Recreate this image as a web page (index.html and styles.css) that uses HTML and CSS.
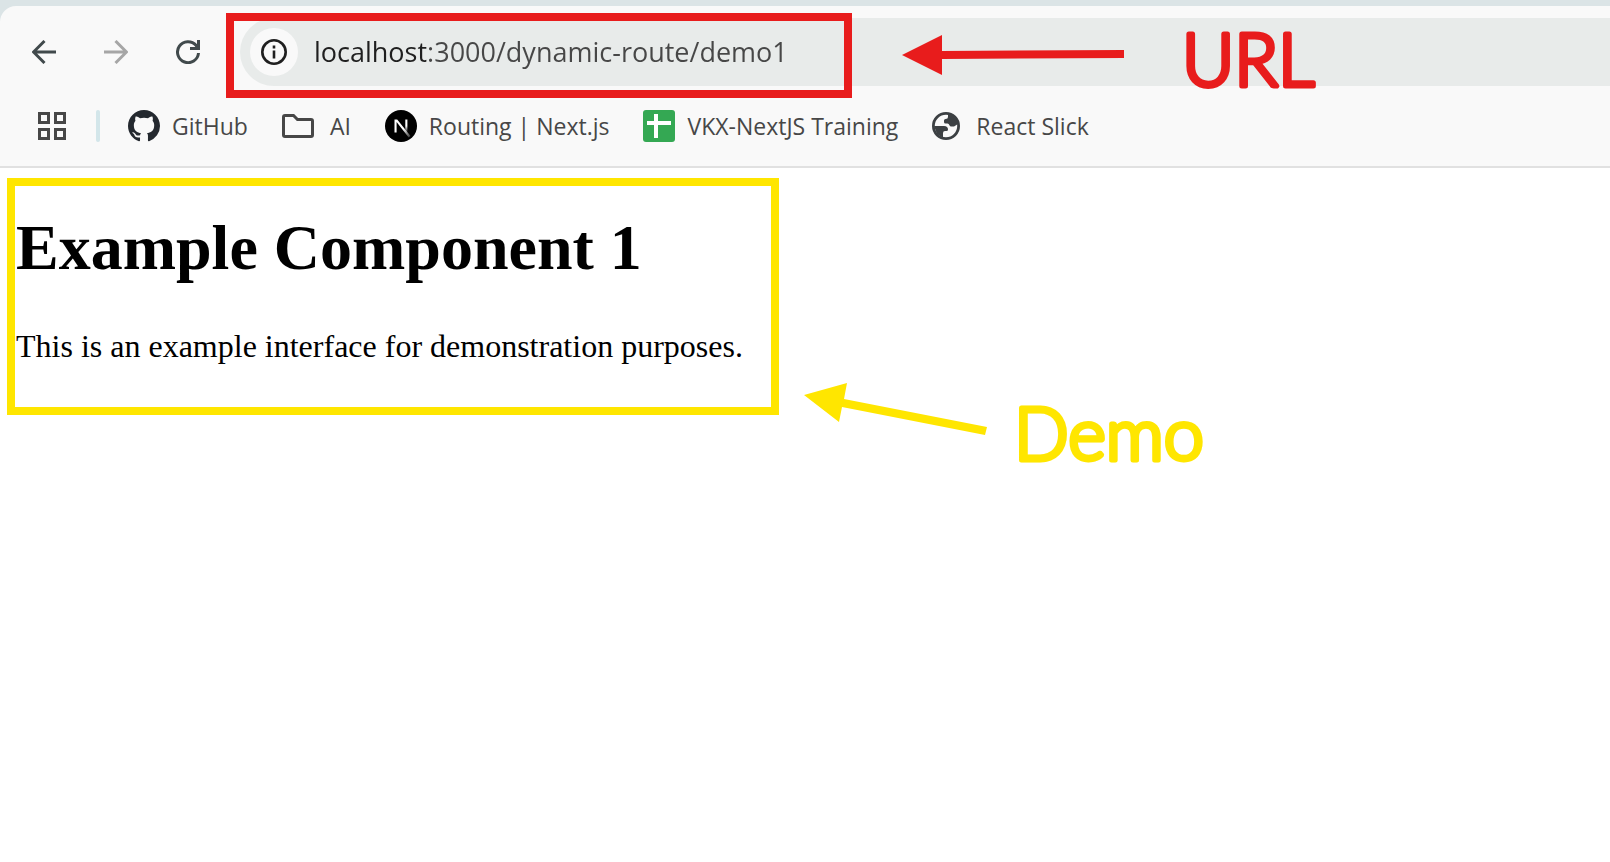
FILE: index.html
```html
<!DOCTYPE html>
<html lang="en">
<head>
<meta charset="utf-8">
<title>Example Component 1</title>
<link rel="stylesheet" href="styles.css">
</head>
<body>
<header class="browser">
  <div class="chrome">
    <nav class="toolbar" aria-label="Browser">
      <button class="nav-button" aria-label="Back">
        <svg width="24" height="24" viewBox="0 0 24 24" fill="none" stroke="currentColor" stroke-width="3"><path d="M24 12H2M12.500 1 1.500 12l11 11"/></svg>
      </button>
      <button class="nav-button" aria-label="Forward" disabled>
        <svg width="24" height="24" viewBox="0 0 24 24" fill="none" stroke="currentColor" stroke-width="3"><path d="M0 12h22M11.500 1l11 11-11 11"/></svg>
      </button>
      <button class="nav-button" aria-label="Reload">
        <svg width="24" height="24" viewBox="0 0 24 24" fill="none" stroke="currentColor" stroke-width="3"><path d="M22.500 13A10.500 10.500 0 1 1 20 5.300L22 8"/><path d="M22.500 0v8.500H14"/></svg>
      </button>
      <form class="address">
        <button class="site-info" type="button" aria-label="Site information">
          <svg width="26" height="26" viewBox="0 0 26 26" fill="none" stroke="currentColor"><circle cx="13" cy="13" r="11.700" stroke-width="2.600"/><path d="M13 11.500v8M13 6.500v3" stroke-width="2.600"/></svg>
        </button>
        <input class="url" type="text" aria-label="Address" value="localhost:3000/dynamic-route/demo1">
      </form>
    </nav>
    <nav class="bookmarks" aria-label="Bookmarks">
      <button class="apps" aria-label="Apps">
        <svg width="28" height="28" viewBox="0 0 28 28" fill="none" stroke="currentColor" stroke-width="3"><path d="M1.500 1.500h9v9h-9zM17.500 1.500h9v9h-9zM1.500 17.500h9v9h-9zM17.500 17.500h9v9h-9z"/></svg>
      </button>
      <span class="divider"></span>
      <a class="bookmark" href="#">
        <svg width="32" height="32" viewBox="0 0 16 16" fill="#24292f"><path d="M8 0C3.580 0 0 3.580 0 8c0 3.540 2.290 6.530 5.470 7.590.4.070.55-.17.55-.38 0-.19-.01-.82-.01-1.490-2.010.37-2.530-.49-2.690-.94-.09-.23-.48-.94-.82-1.130-.28-.15-.68-.52-.01-.53.63-.01 1.080.58 1.230.82.72 1.210 1.870.87 2.330.66.07-.52.28-.87.51-1.070-1.780-.2-3.640-.89-3.640-3.950 0-.87.31-1.590.82-2.150-.08-.2-.36-1.020.08-2.120 0 0 .67-.21 2.200.82A7.600 7.600 0 0 1 8 3.860c.68 0 1.360.09 2 .27 1.530-1.040 2.200-.82 2.200-.82.44 1.100.16 1.920.08 2.120.51.56.82 1.270.82 2.150 0 3.070-1.870 3.750-3.650 3.950.29.25.54.73.54 1.480 0 1.070-.01 1.930-.01 2.200 0 .21.15.46.55.38A8.010 8.010 0 0 0 16 8c0-4.420-3.580-8-8-8z"/></svg>
        <span>GitHub</span>
      </a>
      <a class="bookmark folder" href="#">
        <svg width="32" height="24" viewBox="0 0 32 24" fill="none" stroke="currentColor" stroke-width="3"><path d="M3 1.500h8.500l4 4H29q1.500 0 1.500 1.500v14q0 1.500-1.500 1.500H3q-1.500 0-1.500-1.500V3q0-1.500 1.500-1.500z"/></svg>
        <span>AI</span>
      </a>
      <a class="bookmark" href="#">
        <svg width="32" height="32" viewBox="0 0 32 32"><defs><linearGradient id="fade" x1="0" y1="0" x2="0" y2="1"><stop offset=".5" stop-color="#fff"/><stop offset="1" stop-color="#fff" stop-opacity="0"/></linearGradient><linearGradient id="tail" gradientUnits="userSpaceOnUse" x1="18" y1="19" x2="25" y2="27"><stop stop-color="#fff"/><stop offset="1" stop-color="#fff" stop-opacity=".2"/></linearGradient></defs><circle cx="16" cy="16" r="16"/><path d="M9.500 9.500h2.700L25.500 26l-1.800 1.400L11.600 12v10.500H9.500z" fill="url(#tail)"/><path d="M20.300 9.500h2.100v13h-2.100z" fill="url(#fade)"/></svg>
        <span>Routing | Next.js</span>
      </a>
      <a class="bookmark" href="#">
        <svg width="32" height="32" viewBox="0 0 32 32"><rect width="32" height="32" rx="3" fill="#34a853"/><path d="M11 4h4v7h13v4H15v13h-4V15H4v-4h7z" fill="#fff"/></svg>
        <span>VKX-NextJS Training</span>
      </a>
      <a class="bookmark globe" href="#">
        <svg width="28" height="28" viewBox="0 0 28 28"><circle cx="14" cy="14" r="12.600" fill="#f9f9f9" stroke="#3c4043" stroke-width="2.800"/><path d="M16 2v2.500q0 2.500-2.500 2.500-1.500 0-1.500 1.500V10q0 1.500 1.500 1.500h2q1.500 0 1.800 1.500.5 1.500 2.200 1.500h2.500L26 12 24 5z" fill="#3c4043"/><path d="M2 14h10q4 0 4 3.500 0 1.500-1.500 1.500H13q-2 0-2 2v5L5 22z" fill="#3c4043"/></svg>
        <span>React Slick</span>
      </a>
    </nav>
  </div>
</header>

<main class="page">
  <section class="component">
    <h1>Example Component 1</h1>
    <p>This is an example interface for demonstration purposes.</p>
  </section>
</main>

<div class="mark url-frame"></div>
<svg class="mark url-arrow" width="222" height="40" viewBox="0 0 222 40" fill="currentColor"><path d="M0 20 40 0v16l182-1v8l-182 1v16z"/></svg>
<svg class="mark ink url-label" width="160" height="72"><text x="4" y="60">URL</text></svg>
<svg class="mark demo-arrow" width="184" height="54" viewBox="0 0 184 54" fill="currentColor"><path d="M0 12 43 0l-3 16 143 28-2 8L38 24l-3 15z"/></svg>
<svg class="mark ink demo-label" width="220" height="72"><text x="4" y="60">Demo</text></svg>
</body>
</html>
```
FILE: styles.css
```css
* { box-sizing: border-box; }

body {
  margin: 0;
  position: relative;
  min-height: 100vh;
  overflow-x: hidden;
  background: #fff;
  color: #000;
  font-family: "Liberation Serif", "Times New Roman", serif;
  font-size: 32px;
}

button {
  padding: 0;
  border: 0;
  background: none;
  color: inherit;
}

svg { display: block; flex: none; }

/* Browser bars */
.browser {
  padding-top: 6px;
  background: #dbe4e6;
  font-family: "Open Sans", "Noto Sans", sans-serif;
}

.chrome {
  padding-top: 12px;
  border-bottom: 2px solid #e1e1e1;
  border-top-left-radius: 16px;
  background: #f9f9f9;
  color: #474747;
}

.toolbar { display: flex; padding-left: 8px; }

.nav-button {
  display: grid;
  place-items: center;
  width: 72px;
  height: 68px;
  color: #414a4c;
}

.nav-button:disabled { color: #a6a6a6; }

.address {
  display: flex;
  flex: 1;
  align-items: center;
  gap: 16px;
  height: 68px;
  margin-left: 16px;
  padding-left: 10px;
  border-radius: 34px 0 0 34px;
  background: #e8ebea;
}

.site-info {
  display: grid;
  place-items: center;
  width: 48px;
  height: 48px;
  border-radius: 50%;
  background: #f9f9f9;
  color: #1f1f1f;
}

.url {
  flex: 1;
  min-width: 0;
  padding: 0;
  border: 0;
  outline: 0;
  background: linear-gradient(90deg, #1f1f1f 112px, #474747 112px);
  background-clip: text;
  color: transparent;
  font: 27px/40px "Open Sans", "Noto Sans", sans-serif;
}

.bookmarks {
  display: flex;
  align-items: center;
  gap: 34px;
  height: 80px;
  padding-left: 38px;
  font-size: 23px;
  line-height: 32px;
}

.divider {
  width: 4px;
  height: 32px;
  margin: 0 -6px 0 -4px;
  border-radius: 2px;
  background: #d3e6ea;
}

.bookmark {
  display: flex;
  align-items: center;
  gap: 12px;
  color: inherit;
  text-decoration: none;
  white-space: nowrap;
}

.folder, .globe { gap: 16px; }

/* Page content */
.page { padding: 10px 7px; }

.component {
  width: fit-content;
  padding: 26px 28px 38px 1px;
  border: 8px solid #ffe600;
}

h1 {
  margin: 0 0 40px;
  font-size: 64px;
  line-height: 72px;
}

p { margin: 0; line-height: 45px; }

/* Annotations lying over the page */
.mark { position: absolute; pointer-events: none; }

.ink {
  overflow: visible;
  fill: currentColor;
  stroke: currentColor;
  stroke-width: 5px;
  stroke-linejoin: round;
  font: 300 72px/72px Lato, sans-serif;
}

.url-frame {
  left: 226px;
  top: 13px;
  width: 626px;
  height: 85px;
  border: 8px solid #e81c1c;
}

.url-arrow { left: 902px; top: 35px; color: #e81c1c; }
.url-label { left: 1178px; top: 26px; color: #e81c1c; }
.demo-arrow { left: 804px; top: 383px; color: #ffe600; }
.demo-label { left: 1010px; top: 400px; color: #ffe600; }
```
